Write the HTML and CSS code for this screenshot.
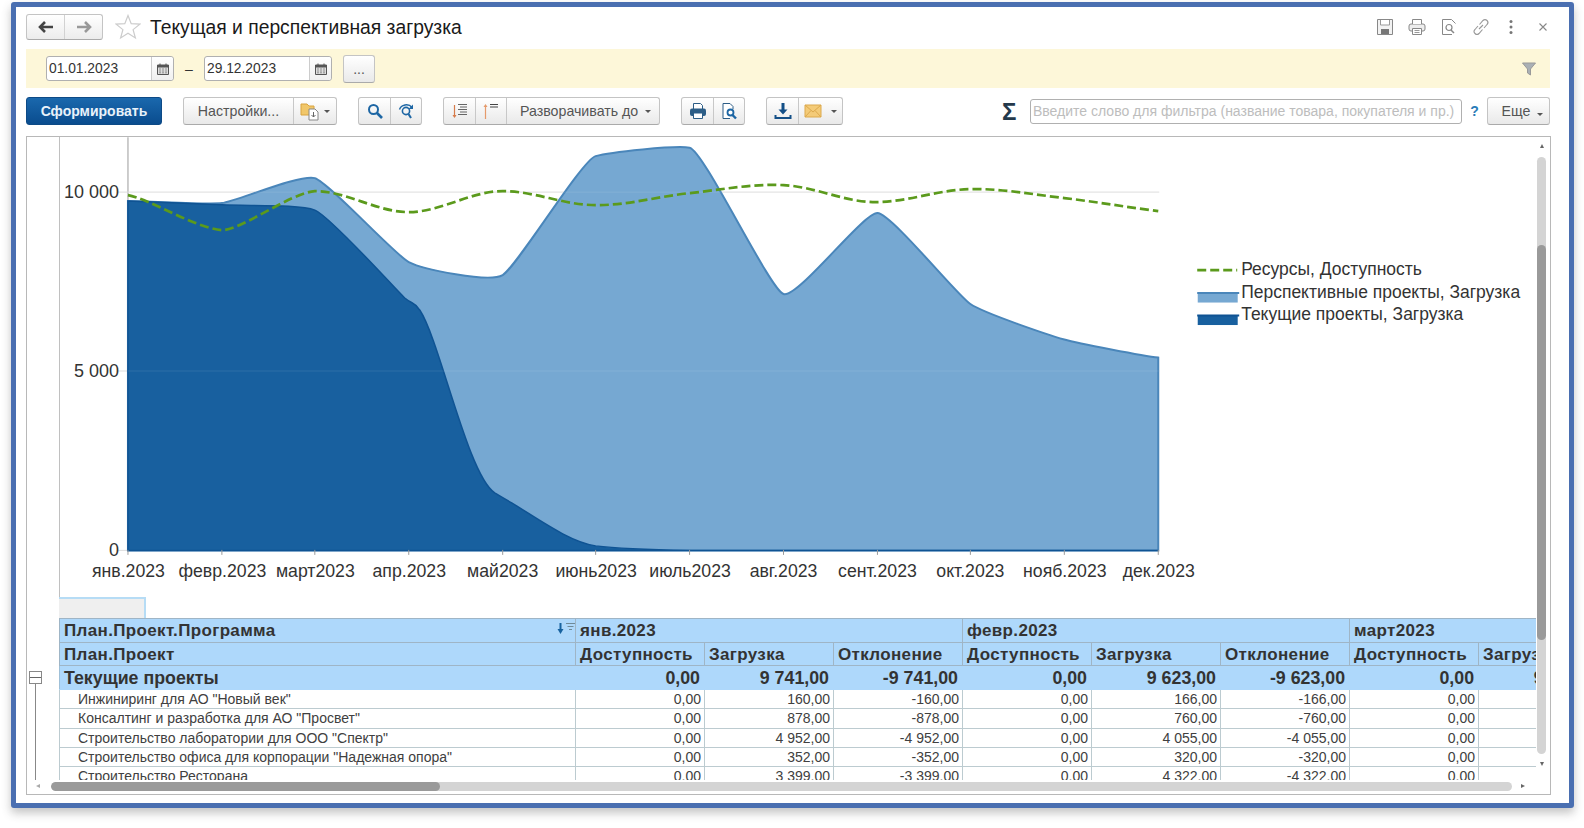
FILE: index.html
```html
<!DOCTYPE html>
<html lang="ru">
<head>
<meta charset="utf-8">
<title>Текущая и перспективная загрузка</title>
<link rel="stylesheet" href="styles.css">
</head>
<body>
<div class="window">
  <header class="head">
    <div class="nav">
      <button class="nav-btn"><svg width="18" height="14" viewBox="0 0 18 14"><path d="M8 2 3 7l5 5M3 7h13" fill="none" stroke="#444" stroke-width="2.600"/></svg></button>
      <button class="nav-btn"><svg width="18" height="14" viewBox="0 0 18 14"><path d="m10 2 5 5-5 5M15 7H2" fill="none" stroke="#999" stroke-width="2.600"/></svg></button>
    </div>
    <svg class="star" width="26" height="26" viewBox="0 0 26 26"><path d="m13 1.5 3.2 8.1 8.7.5-6.8 5.5 2.3 8.4-7.4-4.7-7.4 4.7 2.3-8.4-6.8-5.5 8.7-.5z" fill="#fff" stroke="#ccc" stroke-width="1.2"/></svg>
    <h1 class="title">Текущая и перспективная загрузка</h1>
    <div class="head-icons">
      <svg width="18" height="18" viewBox="0 0 18 18"><path d="M1.5 1.5h15v15h-15z" fill="#f2f2f2" stroke="#888"/><path d="M4.5 2v5h9V2" fill="#fff" stroke="#999"/><path d="M5 11h8v5H5z" fill="#777"/></svg>
      <svg width="18" height="18" viewBox="0 0 18 18"><rect x="1" y="6" width="16" height="7" rx="2" fill="#eee" stroke="#888"/><path d="M4.500 6V1.500h9V6" fill="#fff" stroke="#888"/><path d="M4.500 10.500h9v6h-9z" fill="#fff" stroke="#888"/><path d="M6.500 12.500h5M6.500 14.500h5" stroke="#999"/></svg>
      <svg width="18" height="18" viewBox="0 0 18 18"><path d="M12 16.500H2.500v-15h9l4 4" fill="none" stroke="#888"/><circle cx="9" cy="9.500" r="3" fill="none" stroke="#888" stroke-width="1.200"/><path d="m11 12 3 3" stroke="#888" stroke-width="1.500"/></svg>
      <svg width="18" height="18" viewBox="0 0 18 18"><path d="m7.500 6.500 3.500-4a2.800 2.800 0 0 1 4 4l-3 3.500M10.500 11.500l-3.500 4a2.800 2.800 0 0 1-4-4l3-3.500M7 11l4-4" fill="none" stroke="#999" stroke-width="1.100"/></svg>
      <svg class="kebab" width="6" height="18" viewBox="0 0 6 18"><circle cx="3" cy="3.500" r="1.500" fill="#777"/><circle cx="3" cy="9" r="1.500" fill="#777"/><circle cx="3" cy="14.500" r="1.500" fill="#777"/></svg>
      <svg class="close" width="10" height="18" viewBox="0 0 10 18"><path d="m1.500 5.500 7 7m0-7-7 7" stroke="#888" stroke-width="1.100"/></svg>
    </div>
  </header>

  <section class="filter">
    <div class="date"><span class="date-val">01.01.2023</span><span class="date-cal"><svg width="12" height="12" viewBox="0 0 12 12"><path d="M.5 2h11v9.500H.5z" fill="#ddd" stroke="#555"/><path d="M.500 2h11v2.500H.500z" fill="#555"/><path d="M2.500 6h1m2 0h1m2 0h1m-7 2h1m2 0h1m2 0h1m-7 1.800h1m2 0h1m2 0h1" stroke="#444"/><path d="M3 .5v2M9 .5v2" stroke="#555"/></svg></span></div>
    <span class="dash">–</span>
    <div class="date"><span class="date-val">29.12.2023</span><span class="date-cal"><svg width="12" height="12" viewBox="0 0 12 12"><path d="M.5 2h11v9.500H.5z" fill="#ddd" stroke="#555"/><path d="M.500 2h11v2.500H.500z" fill="#555"/><path d="M2.500 6h1m2 0h1m2 0h1m-7 2h1m2 0h1m2 0h1m-7 1.800h1m2 0h1m2 0h1" stroke="#444"/><path d="M3 .5v2M9 .5v2" stroke="#555"/></svg></span></div>
    <button class="btn dots">...</button>
    <svg class="funnel" width="14" height="14" viewBox="0 0 14 14"><path d="M.5 1h13L8.500 7v6l-3-2V7z" fill="#aab0b5" stroke="#999"/></svg>
  </section>

  <nav class="toolbar">
    <button class="primary">Сформировать</button>
    <div class="group">
      <button class="cell c-set">Настройки...</button>
      <button class="cell c-folder"><svg width="20" height="20" viewBox="0 0 20 20"><path d="M1 3h6l2 2h5v9H1z" fill="#f1c76a" stroke="#d9a441"/><path d="M9 8h6l3 3v8H9z" fill="#fff" stroke="#888"/><path d="M13.500 11v5m-2-2 2 2 2-2" fill="none" stroke="#666"/></svg><span class="caret"></span></button>
    </div>
    <div class="group">
      <button class="cell c-icon"><svg width="16" height="16" viewBox="0 0 16 16"><circle cx="6.500" cy="6.500" r="4.500" fill="none" stroke="#1d66a4" stroke-width="2"/><path d="m10 10 5 5" stroke="#1d66a4" stroke-width="2.600"/></svg></button>
      <button class="cell c-icon"><svg width="16" height="16" viewBox="0 0 16 16"><circle cx="8" cy="8" r="3.600" fill="none" stroke="#1d66a4" stroke-width="1.600"/><path d="m10.500 11 2.500 4" stroke="#1d66a4" stroke-width="2"/><path d="M1.500 6.500C3 1.500 10.500 0 14 4.500" fill="none" stroke="#1d66a4" stroke-width="1.400"/><path d="M15 1.500v4.500h-4.500z" fill="#1d66a4"/></svg></button>
    </div>
    <div class="group">
      <button class="cell c-icon"><svg width="18" height="18" viewBox="0 0 18 18"><path d="M3.500 3v12" stroke="#d77b4a" stroke-width="1.200"/><path d="m1.500 13 2 3 2-3z" fill="#d77b4a"/><path d="M7 2.500h9M9 5h7M7 7.500h9M9 10h7M7 12.500h9" stroke="#666"/></svg></button>
      <button class="cell c-icon"><svg width="18" height="18" viewBox="0 0 18 18"><path d="M3.500 4v13" stroke="#e59a6b" stroke-width="1.200"/><path d="m1.500 5 2-3 2 3z" fill="#e59a6b"/><path d="M8 2.500h8M8 5h8" stroke="#444" stroke-width="1.200"/></svg></button>
      <button class="cell c-expand">Разворачивать до<span class="caret"></span></button>
    </div>
    <div class="group">
      <button class="cell c-icon"><svg width="18" height="18" viewBox="0 0 18 18"><path d="M4.500 7V1.500h7L13.500 3.500V7" fill="#fff" stroke="#2c5d86"/><rect x="1" y="6.500" width="16" height="7.500" rx="2" fill="#2c5d86"/><path d="M4.500 11h9v5.500h-9z" fill="#fff" stroke="#2c5d86"/></svg></button>
      <button class="cell c-icon"><svg width="18" height="18" viewBox="0 0 18 18"><path d="M13 7V4.500L10 1.500H3v15h7" fill="#fff" stroke="#2c5d86"/><circle cx="10.500" cy="10.500" r="3" fill="none" stroke="#1d66a4" stroke-width="1.800"/><path d="m12.500 13 3.500 3.500" stroke="#1d66a4" stroke-width="2.400"/></svg></button>
    </div>
    <div class="group">
      <button class="cell c-icon"><svg width="18" height="18" viewBox="0 0 18 18"><path d="M9 1v9" stroke="#134f87" stroke-width="3"/><path d="m4.500 7.500 4.500 5 4.500-5z" fill="#134f87"/><path d="M1.500 13v3h15v-3" fill="none" stroke="#134f87" stroke-width="2"/></svg></button>
      <button class="cell c-mail"><svg width="18" height="14" viewBox="0 0 18 14"><path d="M1 1h16v12H1z" fill="#f4cb78" stroke="#dca94d"/><path d="m1 1 8 7 8-7M1 13l6-6.500M17 13l-6-6.500" fill="none" stroke="#dca94d"/></svg><span class="caret"></span></button>
    </div>
    <span class="sigma">Σ</span>
    <div class="search">Введите слово для фильтра (название товара, покупателя и пр.)</div>
    <span class="help">?</span>
    <button class="btn more">Еще<span class="caret"></span></button>
  </nav>

  <main class="panel">
    <div class="gutter">
      <span class="minus"></span>
      <span class="tree-line"></span>
    </div>
    <div class="content">
      <svg class="chart" width="1476" height="460" viewBox="60 137 1476 460">
        <path class="axis" d="M128 137V550"/>
        <path class="grid" d="M118 192H1160M118 371H1160M118 550.500H1160"/>
        <path class="area-light" d="M128 201C150 201 208 204.750 222 203C236 201.250 301 173.700 315 178C329 182.300 395 254.800 409 262C423 269.200 489 283 503 275C517 267 582 160 596 156C610 152 676 145 690 147.500C704 150 770 289.100 784 294C798 298.900 864 212.200 878 213C892 213.800 957 294.500 971 304C985 313.500 1051 335.500 1065 339.500C1079 343.500 1145 356 1159 357.600V550.500H128Z"/>
        <path class="area-dark" d="M128 201C160 202 200 203.600 222 204.700C250 206 300 204 315 210C330 216 390 283 405 298C412 304 415 302 420 310C440 340 468 475 495 493C500 496 505 499 512 503C540 520 570 542 596 546C620 549 660 550 690 550.500L1159 550.500H128Z"/>
        <path class="grid-over" d="M128 192H1160M128 371H1160"/>
        <path class="avail" d="M128 195C150 199 195 228 222 230C240 231 290 193 315 191C347 191 377 212 409 212C441 212 471 191 503 191C535 191 564 205 596 205C628 205.300 658 196.400 690 193C722 189.600 752 183.500 784 185C816 186.500 846 202.700 878 202C910 201.300 939 189.700 971 189C1003 188.300 1033 194.300 1065 198C1097 201.700 1127 207 1159 211"/>
        <path class="ticks" d="M128 550v5M222 550v5M315 550v5M409 550v5M503 550v5M596 550v5M690 550v5M784 550v5M878 550v5M971 550v5M1065 550v5M1159 550v5"/>
        <g class="lbl-y">
          <text x="119" y="198">10 000</text>
          <text x="119" y="377">5 000</text>
          <text x="119" y="556">0</text>
        </g>
        <g class="lbl-x">
          <text x="128.500" y="577">янв.2023</text>
          <text x="222.500" y="577">февр.2023</text>
          <text x="315.500" y="577">март2023</text>
          <text x="409.500" y="577">апр.2023</text>
          <text x="503" y="577">май2023</text>
          <text x="596.500" y="577">июнь2023</text>
          <text x="690.500" y="577">июль2023</text>
          <text x="784" y="577">авг.2023</text>
          <text x="878" y="577">сент.2023</text>
          <text x="971" y="577">окт.2023</text>
          <text x="1065.500" y="577">нояб.2023</text>
          <text x="1159.500" y="577">дек.2023</text>
        </g>
        <path class="avail" d="M1198 270H1238"/>
        <rect class="key-light" x="1198.500" y="292.500" width="40" height="10"/>
        <path class="key-light-top" d="M1198 293H1240"/>
        <rect class="key-dark" x="1198.500" y="315" width="40" height="10"/>
        <path class="key-dark-top" d="M1198 315.500H1240"/>
        <g class="lbl-leg">
          <text x="1242" y="275">Ресурсы, Доступность</text>
          <text x="1242" y="298">Перспективные проекты, Загрузка</text>
          <text x="1242" y="320">Текущие проекты, Загрузка</text>
        </g>
      </svg>
      <div class="tab"></div>
      <div class="table-clip">
        <table class="report">
          <colgroup><col class="c-first"><col class="c-num"><col class="c-num"><col class="c-num"><col class="c-num"><col class="c-num"><col class="c-num"><col class="c-num"><col class="c-num"></colgroup>
          <tr class="r-head">
            <th>План.Проект.Программа<svg class="sort" width="18" height="13" viewBox="0 0 18 13"><path d="M3.500 1v8" stroke="#17629f" stroke-width="2"/><path d="m.5 7 3 5 3-5z" fill="#17629f"/><path d="M9 1.500h9M10.500 4.500h6M12 7.500h3" stroke="#6f8a99" stroke-width="1.200"/></svg></th>
            <th colspan="3">янв.2023</th><th colspan="3">февр.2023</th><th colspan="2">март2023</th>
          </tr>
          <tr class="r-head">
            <th>План.Проект</th><th>Доступность</th><th>Загрузка</th><th>Отклонение</th><th>Доступность</th><th>Загрузка</th><th>Отклонение</th><th>Доступность</th><th>Загрузка</th>
          </tr>
          <tr class="r-total">
            <td class="name">Текущие проекты</td><td>0,00</td><td>9 741,00</td><td>-9 741,00</td><td>0,00</td><td>9 623,00</td><td>-9 623,00</td><td>0,00</td><td>9 444,00</td>
          </tr>
          <tr class="r-data"><td class="name">Инжиниринг для АО "Новый век"</td><td>0,00</td><td>160,00</td><td>-160,00</td><td>0,00</td><td>166,00</td><td>-166,00</td><td>0,00</td><td></td></tr>
          <tr class="r-data"><td class="name">Консалтинг и разработка для АО "Просвет"</td><td>0,00</td><td>878,00</td><td>-878,00</td><td>0,00</td><td>760,00</td><td>-760,00</td><td>0,00</td><td></td></tr>
          <tr class="r-data"><td class="name">Строительство лаборатории для ООО "Спектр"</td><td>0,00</td><td>4 952,00</td><td>-4 952,00</td><td>0,00</td><td>4 055,00</td><td>-4 055,00</td><td>0,00</td><td></td></tr>
          <tr class="r-data"><td class="name">Строительство офиса для корпорации "Надежная опора"</td><td>0,00</td><td>352,00</td><td>-352,00</td><td>0,00</td><td>320,00</td><td>-320,00</td><td>0,00</td><td></td></tr>
          <tr class="r-data"><td class="name">Строительство Ресторана</td><td>0,00</td><td>3 399,00</td><td>-3 399,00</td><td>0,00</td><td>4 322,00</td><td>-4 322,00</td><td>0,00</td><td></td></tr>
        </table>
      </div>
    </div>
    <div class="vscroll">
      <span class="arrow-up"></span>
      <div class="v-track"><div class="v-thumb"></div></div>
      <span class="arrow-down"></span>
    </div>
    <div class="hscroll">
      <span class="arrow-left"></span>
      <div class="h-track"><div class="h-thumb"></div></div>
      <span class="arrow-right"></span>
    </div>
  </main>
</div>
</body>
</html>
```
FILE: styles.css
```css
* { box-sizing: border-box; }
html, body { margin: 0; height: 828px; overflow: hidden; background: #fff; }
body { padding: 2px 0 0 11px; font-family: "Liberation Sans", Arial, sans-serif; color: #333; }
button { font-family: inherit; padding: 0; margin: 0; }

.window {
  width: 1563px; height: 806px;
  border: 5px solid #4a6fb1; border-radius: 3px;
  background: #fff;
  padding: 7px 19px 0 10px;
  display: flex; flex-direction: column;
  box-shadow: 0 5px 10px rgba(60, 60, 60, .3);
}

.head { height: 26px; display: flex; align-items: center; flex: none; }
.nav { width: 77px; height: 26px; display: flex; border: 1px solid #c4c4c4; border-bottom-color: #aaa; border-radius: 3px; background: linear-gradient(#fff, #ececec); overflow: hidden; }
.nav-btn { flex: 1; border: 0; background: none; display: flex; align-items: center; justify-content: center; }
.nav-btn + .nav-btn { border-left: 1px solid #d2d2d2; }
.star { margin-left: 12px; flex: none; }
.title { margin: 0 0 0 9px; padding-top: 1px; font-size: 19.300px; font-weight: 400; color: #1a1a1a; line-height: 26px; white-space: nowrap; }
.head-icons { margin-left: auto; display: flex; align-items: center; gap: 14px; padding-right: 2px; }
.head-icons svg { display: block; }
.head-icons .kebab { margin-left: 4px; }
.head-icons .close { margin-left: 10px; }

.filter { height: 39px; margin-top: 9px; background: #fdf7d9; display: flex; align-items: center; padding-left: 20px; flex: none; }
.date { width: 128px; height: 25px; border: 1px solid #b0b0b0; border-radius: 3px; background: #fff; display: flex; }
.date-val { flex: 1; font-size: 13.800px; line-height: 23px; padding-left: 2px; color: #333; }
.date-cal { width: 22px; border-left: 1px solid #ccc; display: flex; align-items: center; justify-content: center; background: linear-gradient(#fff, #f0f0f0); border-radius: 0 3px 3px 0; }
.dash { width: 30px; text-align: center; font-size: 14px; color: #333; }
.btn { border: 1px solid #c4c4c4; border-bottom-color: #aaa; border-radius: 3px; background: linear-gradient(#fff, #e9e9e9); color: #555; }
.dots { width: 32px; height: 28px; margin-left: 11px; font-size: 14px; }
.funnel { margin-left: auto; margin-right: 14px; }

.toolbar { height: 28px; margin-top: 9px; display: flex; align-items: center; flex: none; }
.primary { width: 136px; height: 28px; border: 1px solid #0d4a86; border-radius: 3px; background: linear-gradient(#1a68ad, #0a4c8e); color: #e9f2fa; font-size: 14px; font-weight: 700; }
.group { height: 28px; margin-left: 21px; display: flex; border: 1px solid #c4c4c4; border-bottom-color: #aaa; border-radius: 3px; background: linear-gradient(#fff, #e9e9e9); flex: none; }
.cell { height: 26px; border: 0; background: none; display: flex; align-items: center; justify-content: center; color: #555; font-size: 14.200px; }
.cell + .cell { border-left: 1px solid #c8c8c8; }
.c-set { width: 109px; }
.c-folder { width: 43px; gap: 4px; }
.c-icon { width: 31px; }
.c-expand { width: 153px; padding-left: 13px; justify-content: flex-start; }
.c-mail { width: 44px; gap: 9px; }
.caret { display: inline-block; width: 0; height: 0; border: 3px solid transparent; border-top: 3px solid #555; border-bottom: 0; margin-left: 7px; }
.c-folder .caret, .c-mail .caret { margin-left: 0; }
.sigma { margin-left: auto; font-size: 24px; font-weight: 700; color: #24394b; width: 28px; text-align: left; line-height: 28px; padding-top: 2px; }
.search { width: 432px; height: 25px; border: 1px solid #b0b0b0; border-radius: 3px; padding-left: 2px; font-size: 14px; line-height: 23px; color: #bdbdbd; white-space: nowrap; overflow: hidden; }
.help { width: 25px; text-align: center; font-size: 14px; font-weight: 700; color: #2a7cb8; }
.more { width: 63px; height: 28px; font-size: 14.200px; padding-left: 8px; }

.panel {
  width: 1525px; height: 659px; margin-top: 11px;
  border: 1px solid #b8b8b8;
  display: grid; grid-template-columns: 32px 1477px 14px; grid-template-rows: 643px 14px;
  flex: none;
}
.gutter { display: flex; flex-direction: column; align-items: center; padding-top: 534px; padding-right: 16px; }
.minus { width: 13px; height: 13px; border: 1px solid #888; flex: none; background: linear-gradient(to bottom, transparent 5px, #666 5px, #666 6px, transparent 6px); }
.tree-line { width: 1px; flex: 1; background: #888; }

.content { overflow: hidden; display: flex; flex-direction: column; }
.chart { display: block; flex: none; border-left: 1px solid #c0c0c0; font-family: "Liberation Sans", Arial, sans-serif; }
.axis { stroke: #bdbdbd; stroke-width: 1.500; fill: none; }
.grid { stroke: #ddd; stroke-width: 1; fill: none; }
.grid-over { stroke: #fff; stroke-opacity: .1; stroke-width: 1; fill: none; }
.area-light { fill: #76a8d2; stroke: #4a86ba; stroke-width: 2; }
.area-dark { fill: #18609f; stroke: #0f5393; stroke-width: 1.500; }
.avail { fill: none; stroke: #5b9a1c; stroke-width: 2.700; stroke-dasharray: 9 4; }
.ticks { stroke: #999; stroke-width: 1; fill: none; }
.lbl-y text { font-size: 18px; fill: #333; text-anchor: end; }
.lbl-x text { font-size: 17.700px; fill: #333; text-anchor: middle; }
.lbl-leg text { font-size: 17.500px; fill: #333; }
.key-light { fill: #76a8d2; }
.key-light-top { stroke: #4a86ba; stroke-width: 2; }
.key-dark { fill: #18609f; }
.key-dark-top { stroke: #0f5393; stroke-width: 2; }

.tab { width: 87px; height: 21px; background: #efefef; border-top: 2px solid #b6dcf5; border-right: 2px solid #b6dcf5; flex: none; }
.table-clip { height: 162px; overflow: hidden; flex: none; }
.report { border-collapse: collapse; table-layout: fixed; width: 1548px; }
.c-first { width: 516px; }
.c-num { width: 129px; }
.report th, .report td { padding: 0 4px; white-space: nowrap; overflow: hidden; color: #333; }
.r-head th { height: 23.500px; padding-top: 2px; background: #aed8fb; border: 1px solid #9fb5c6; font-size: 17px; font-weight: 700; text-align: left; position: relative; letter-spacing: .35px; }
.r-total td { height: 24px; padding-top: 2px; background: #aed8fb; border: 1px solid #aed8fb; border-left-color: #9fc0d8; font-size: 17.800px; font-weight: 700; text-align: right; }
.r-total td.name { text-align: left; }
.r-data td { height: 19.300px; border-left: 1px solid #bccbd0; border-bottom: 1px solid #bccbd0; font-size: 14px; text-align: right; line-height: 18px; padding-right: 3px; color: #404040; }
.r-data td.name { text-align: left; padding-left: 18px; }
.sort { position: absolute; right: 0; top: 3px; }

.vscroll { display: flex; flex-direction: column; align-items: center; padding: 7px 0 0; width: 14px; }
.arrow-up { width: 0; height: 0; border: 2.500px solid transparent; border-bottom: 4px solid #666; border-top: 0; flex: none; margin-left: -3px; }
.arrow-down { width: 0; height: 0; border: 2.500px solid transparent; border-top: 4px solid #666; border-bottom: 0; flex: none; margin-top: 8px; margin-left: -3px; }
.v-track { width: 9px; height: 597px; margin-top: 9px; background: #d4d4d4; border-radius: 5px; overflow: hidden; padding-top: 88px; flex: none; margin-left: -4px; }
.v-thumb { height: 395px; background: #9a9a9a; border-radius: 5px; }
.hscroll { grid-column: 1 / -1; display: flex; align-items: center; padding: 0 25px 2px 9px; }
.arrow-left { width: 0; height: 0; border: 2.500px solid transparent; border-right: 4px solid #aaa; border-left: 0; flex: none; }
.arrow-right { width: 0; height: 0; border: 2.500px solid transparent; border-left: 4px solid #666; border-right: 0; flex: none; margin-left: 9px; }
.h-track { flex: 1; height: 9px; margin-left: 11px; background: #d4d4d4; border-radius: 5px; overflow: hidden; }
.h-thumb { width: 389px; height: 9px; background: #9a9a9a; border-radius: 5px; }
```
